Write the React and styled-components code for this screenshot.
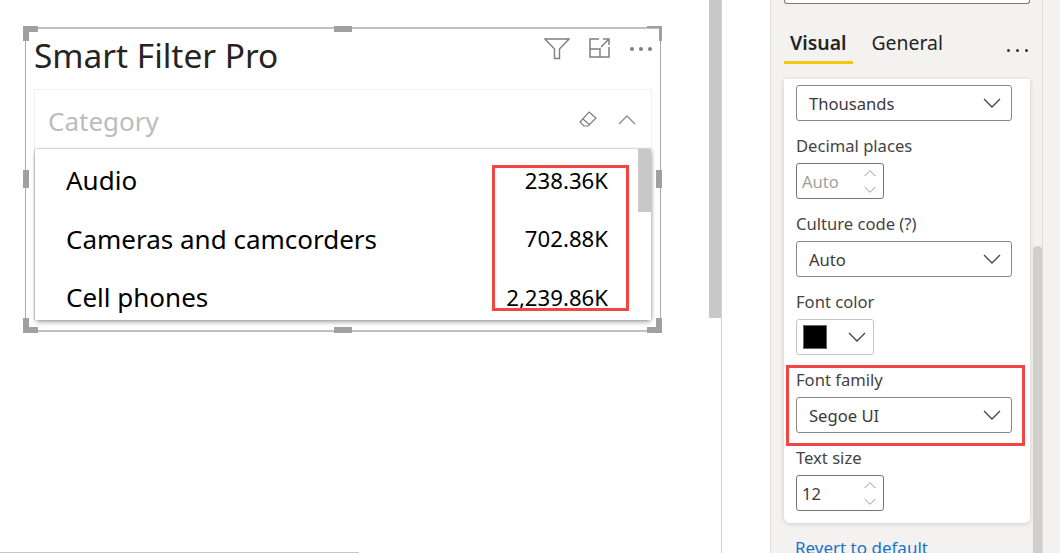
import React from 'react'
import styled, {createGlobalStyle} from 'styled-components'

const FONT = '"Noto Sans", "Open Sans", sans-serif';

const GlobalStyle = createGlobalStyle`
  html, body {
    margin: 0;
    padding: 0;
    background: #fff;
  }
  body {
    font-family: ${FONT};
  }
`;

const Chevron = ({up, size = 18, color = '#444'}) => (
  <svg width={size} height={size / 2 + 2} viewBox="0 0 18 11" fill="none">
    <path d={up ? 'M1 10L9 2l8 8' : 'M1 1l8 8 8-8'} stroke={color} strokeWidth="1.3"/>
  </svg>
)

const FilterIcon = () => (
  <svg width="26" height="22" viewBox="0 0 26 22" fill="none" stroke="#7f7f7f" strokeWidth="1.4">
    <path d="M1 1h24l-9.5 10v9.5h-5V11z"/>
  </svg>
)

const FocusIcon = () => (
  <svg width="21" height="20" viewBox="0 0 21 20" fill="none" stroke="#7f7f7f" strokeWidth="1.5">
    <path d="M10 1H1v18h19V9M1 11h10v8M12 9l7-7M14 1h6v6"/>
  </svg>
)

const EraserIcon = () => (
  <svg width="18" height="17" viewBox="0 0 18 17" fill="none" stroke="#7f7f7f" strokeWidth="1.2">
    <path d="M10 1l7 6-8 8H5L1 11zM4 8l7 6"/>
  </svg>
)

function NumberField({value, muted}) {
  return (
    <Spin>
      <SpinValue $muted={muted}>{value}</SpinValue>
      <SpinArrows>
        <Chevron up size={12} color="#8a8a8a"/>
        <Chevron size={12} color="#8a8a8a"/>
      </SpinArrows>
    </Spin>
  )
}

function Select({value}) {
  return (
    <Dropdown>
      <span>{value}</span>
      <Chevron/>
    </Dropdown>
  )
}

const rows = [
  {name: 'Audio', value: '238.36K'},
  {name: 'Cameras and camcorders', value: '702.88K'},
  {name: 'Cell phones', value: '2,239.86K'},
];

function App() {
  const allRows = rows.map(row => (
    <Row key={row.name}>
      <RowName>{row.name}</RowName>
      <RowValue>{row.value}</RowValue>
    </Row>
  ))

  return (
    <Page>
      <GlobalStyle/>
      <Canvas>
        <Frame>
          <Handle $x="left" $y="top" $corner/>
          <Handle $x="right" $y="top" $corner $thin/>
          <Handle $x="left" $y="bottom" $corner/>
          <Handle $x="right" $y="bottom" $corner/>
          <Handle $x="center" $y="top"/>
          <Handle $x="center" $y="bottom"/>
          <Handle $x="left" $y="middle" $tall/>
          <Handle $x="right" $y="middle" $tall/>
          <TitleBar>
            <Title>Smart Filter Pro</Title>
            <VisualActions>
              <FilterIcon/>
              <FocusIcon/>
              <Dots>
                <i/><i/><i/>
              </Dots>
            </VisualActions>
          </TitleBar>
          <Slicer>
            <SlicerHeader>
              <SlicerLabel>Category</SlicerLabel>
              <SlicerActions>
                <EraserIcon/>
                <Chevron up size={18} color="#8c8c8c"/>
              </SlicerActions>
            </SlicerHeader>
            <List>
              {allRows}
              <ListThumb/>
              <ValuesHighlight/>
            </List>
          </Slicer>
        </Frame>
        <CanvasEdge/>
      </Canvas>
      <CanvasScroll/>
      <Gutter/>
      <Pane>
        <TopField/>
        <Tabs>
          <Tab $active>Visual</Tab>
          <Tab>General</Tab>
          <TabMore>
            <i/><i/><i/>
          </TabMore>
        </Tabs>
        <Card>
          <Select value="Thousands"/>
          <FieldLabel>Decimal places</FieldLabel>
          <NumberField value="Auto" muted/>
          <FieldLabel>Culture code (?)</FieldLabel>
          <Select value="Auto"/>
          <FieldLabel>Font color</FieldLabel>
          <ColorPicker>
            <Swatch/>
            <Chevron size={18}/>
          </ColorPicker>
          <FontGroup>
            <FieldLabel>Font family</FieldLabel>
            <Select value="Segoe UI"/>
            <FontHighlight/>
          </FontGroup>
          <FieldLabel>Text size</FieldLabel>
          <NumberField value="12"/>
        </Card>
        <Revert>Revert to default</Revert>
        <PaneScroll/>
        <PaneEdge/>
      </Pane>
    </Page>
  )
}

const Page = styled.div`
  display: flex;
  width: 1060px;
  height: 553px;
  overflow: hidden;
`;

const Canvas = styled.div`
  position: relative;
  width: 709px;
  flex: none;
  padding: 27px 0 0 25px;
  box-sizing: border-box;
`;

const CanvasEdge = styled.div`
  position: absolute;
  left: 0;
  bottom: 0;
  width: 359px;
  height: 1px;
  background: #c8c8c8;
`;

const CanvasScroll = styled.div`
  width: 12px;
  height: 318px;
  flex: none;
  background: #c8c8c8;
`;

const Gutter = styled.div`
  width: 49px;
  flex: none;
  border-left: 1px solid #d2d2d2;
  box-sizing: border-box;
`;

const Frame = styled.div`
  position: relative;
  width: 636px;
  height: 305px;
  box-sizing: border-box;
  border: 1px solid #aaa;
  border-top: 2px solid #c0c0c0;
  border-bottom: 2px solid #c0c0c0;
  padding: 0 8px;
`;

const Handle = styled.div`
  position: absolute;
  background: #a0a0a0;
  width: ${p => (p.$thin ? '3px' : p.$tall || p.$corner ? '6px' : '18px')};
  height: ${p => (p.$tall ? '18px' : p.$corner ? '15px' : '6px')};
  ${p => p.$x === 'left' && 'left: -3px;'}
  ${p => p.$x === 'right' && 'right: -2px;'}
  ${p => p.$x === 'center' && 'left: 308px;'}
  ${p => p.$y === 'top' && 'top: -3px;'}
  ${p => p.$y === 'bottom' && 'bottom: -3px;'}
  ${p => p.$y === 'middle' && 'top: 141px;'}

  &::after {
    content: '';
    display: ${p => (p.$corner ? 'block' : 'none')};
    position: absolute;
    width: 15px;
    height: ${p => (p.$thin ? '2px' : '6px')};
    background: #a0a0a0;
    ${p => (p.$x === 'left' ? 'left: 0;' : 'right: 0;')}
    ${p => (p.$y === 'top' ? 'top: 0;' : 'bottom: 0;')}
  }
`;

const TitleBar = styled.div`
  display: flex;
  justify-content: space-between;
  height: 60px;
`;

const Title = styled.div`
  font-size: 33.4px;
  line-height: 52px;
  color: #252423;
`;

const VisualActions = styled.div`
  display: flex;
  align-items: flex-start;
  gap: 19px;
  padding: 9px 0 0;
`;

const Dots = styled.div`
  display: flex;
  gap: 5px;
  padding-top: 9px;
  margin-left: 1px;

  i {
    width: 4px;
    height: 4px;
    border-radius: 50%;
    background: #7f7f7f;
  }
`;

const Slicer = styled.div`
  width: 618px;
`;

const SlicerHeader = styled.div`
  display: flex;
  align-items: center;
  justify-content: space-between;
  height: 60px;
  box-sizing: border-box;
  border: 1px solid #f0f0f0;
  border-bottom: 1px solid #f3f3f3;
  padding: 0 15px 0 13px;
`;

const SlicerLabel = styled.div`
  font-size: 26px;
  color: #bcbcbc;
  margin-top: 3px;
`;

const SlicerActions = styled.div`
  display: flex;
  align-items: center;
  gap: 21px;
`;

const List = styled.div`
  position: relative;
  margin-left: 1px;
  width: 616px;
  height: 171px;
  box-sizing: border-box;
  padding-top: 2px;
  background: #fff;
  box-shadow: 0 3px 5px -1px rgba(0, 0, 0, 0.35), 2px 0 4px -1px rgba(0, 0, 0, 0.2), -1px 0 1px rgba(0, 0, 0, 0.15), 0 -1px 2px rgba(0, 0, 0, 0.05);
`;

const Row = styled.div`
  display: flex;
  align-items: center;
  justify-content: space-between;
  height: 58.5px;
  padding: 0 43px 0 31px;
`;

const RowName = styled.div`
  font-size: 26px;
  color: #000;
`;

const RowValue = styled.div`
  font-size: 22.2px;
  color: #000;
`;

const ListThumb = styled.div`
  position: absolute;
  top: 0;
  right: 0;
  width: 13px;
  height: 63px;
  background: #c8c8c8;
`;

const ValuesHighlight = styled.div`
  position: absolute;
  left: 457px;
  top: 16px;
  width: 137px;
  height: 146px;
  box-sizing: border-box;
  border: 3px solid #f44545;
`;

const Pane = styled.div`
  position: relative;
  width: 290px;
  flex: none;
  background: #f3f2f1;
  border-left: 1px solid #e1dfdd;
  box-sizing: border-box;
  padding: 0 0 0 13px;
`;

const TopField = styled.div`
  width: 244px;
  height: 3px;
  border: 1px solid #7a7a7a;
  border-top: none;
  border-radius: 0 0 3px 3px;
  background: #fff;
`;

const Tabs = styled.div`
  display: flex;
  align-items: flex-end;
  width: 246px;
  height: 60px;
  gap: 13px;
  box-sizing: border-box;
`;

const Tab = styled.div`
  height: 36px;
  padding: 0 ${p => (p.$active ? '6px' : '0')} 0 6px;
  font-size: 19.4px;
  line-height: 36px;
  color: #252423;
  font-weight: ${p => (p.$active ? 600 : 400)};
  border-bottom: 3px solid ${p => (p.$active ? '#f2c811' : 'transparent')};
  margin-right: ${p => (p.$active ? '0' : 'auto')};
`;

const TabMore = styled.div`
  display: flex;
  gap: 6px;
  padding: 0 2px 12px 0;

  i {
    width: 3px;
    height: 3px;
    border-radius: 50%;
    background: #333;
  }
`;

const Card = styled.div`
  width: 246px;
  height: 444px;
  margin-top: 15px;
  box-sizing: border-box;
  padding: 6px 12px 0;
  background: #fff;
  border-radius: 0 0 6px 6px;
  box-shadow: 0 1px 5px rgba(0, 0, 0, 0.16);
`;

const FieldLabel = styled.div`
  font-size: 16.6px;
  line-height: 22px;
  padding: 14px 0 6px;
  color: #444;
`;

const Dropdown = styled.div`
  display: flex;
  align-items: center;
  justify-content: space-between;
  width: 216px;
  height: 36px;
  box-sizing: border-box;
  padding: 0 10px 0 12px;
  background: #fff;
  border: 1px solid #8a8886;
  border-radius: 3px;
  font-size: 16.6px;
  color: #3b3a39;
`;

const Spin = styled.div`
  display: flex;
  align-items: center;
  justify-content: space-between;
  width: 88px;
  height: 36px;
  box-sizing: border-box;
  padding: 0 7px 0 5px;
  border: 1px solid #757575;
  border-radius: 3px;
`;

const SpinValue = styled.span`
  font-size: 16.6px;
  color: ${p => (p.$muted ? '#a19f9d' : '#3b3a39')};
`;

const SpinArrows = styled.div`
  display: flex;
  flex-direction: column;
  gap: 9px;
`;

const ColorPicker = styled.div`
  display: flex;
  align-items: center;
  justify-content: space-between;
  width: 78px;
  height: 36px;
  box-sizing: border-box;
  padding: 0 7px 0 6px;
  border: 1px solid #c8c6c4;
  border-radius: 3px;
`;

const Swatch = styled.div`
  width: 24px;
  height: 24px;
  background: #000;
  border: 1px solid #666;
  box-sizing: border-box;
`;

const FontGroup = styled.div`
  position: relative;
`;

const FontHighlight = styled.div`
  position: absolute;
  left: -10px;
  top: 10px;
  width: 239px;
  height: 81px;
  box-sizing: border-box;
  border: 3px solid #f44545;
`;

const Revert = styled.div`
  margin: 13px 0 0 11px;
  font-size: 17px;
  color: #1a73c7;
  white-space: nowrap;
`;

const PaneScroll = styled.div`
  position: absolute;
  left: 262px;
  top: 246px;
  bottom: 0;
  width: 9px;
  border-radius: 5px 5px 0 0;
  background: #d0cfcd;
`;

const PaneEdge = styled.div`
  position: absolute;
  left: 271px;
  top: 0;
  bottom: 0;
  width: 1px;
  background: #dedddc;
`;

export default App
